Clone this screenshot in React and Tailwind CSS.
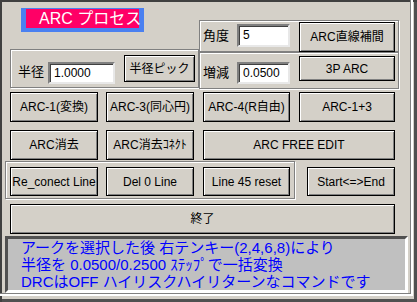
const btn =
  "flex items-center justify-center border border-black bg-[#d4d0c8] text-[12px] leading-none text-black whitespace-nowrap shadow-[inset_1px_1px_0_#ffffff,inset_-1px_-1px_0_#808080]";
const etched = "border border-[#808080] shadow-[inset_1px_1px_0_#ffffff,1px_1px_0_#ffffff]";
const field =
  "bg-white border-2 border-t-[#808080] border-l-[#808080] border-r-[#e8e8e8] border-b-[#e8e8e8] shadow-[inset_1px_1px_0_#404040] text-[12px] leading-none pl-[4px] pt-[3px] text-black";

const ArcProcess = () => {
  return (
    <div className="w-[417px] h-[302px] bg-[#d4d0c8] overflow-hidden font-['Liberation_Sans','Noto_Sans_CJK_JP',sans-serif] shadow-[inset_2px_2px_0_#404040,inset_-3px_-3px_0_#505050]">
      <div className="w-[413px] h-[296px] shadow-[inset_-2px_-2px_0_#ffffff,inset_-3px_-3px_0_#808080]">
        {/* top area */}
        <div className="flex h-[89px]">
          <div className="w-[199px] flex flex-col">
            <div className="ml-[21px] mt-[8px] w-[123px] h-[24px] bg-[#4a80f0] px-[5px] pt-[1px] pb-[4px]">
              <div className="h-full bg-[#ff0066] text-white text-[16px] leading-[19px] pl-[13px] whitespace-nowrap">
                ARC プロセス
              </div>
            </div>
            <div className={`ml-[10px] mt-[17px] w-[189px] h-[39px] flex items-start ${etched}`}>
              <span className="ml-[7px] mt-[15px] text-[13px] leading-none">半径</span>
              <div className={`ml-[4px] mt-[12px] w-[67px] h-[22px] ${field}`}>1.0000</div>
              <button className={`ml-[9px] mt-[5px] w-[71px] h-[27px] ${btn}`}>半径ピック</button>
            </div>
          </div>
          <div className="flex flex-col mt-[20px]">
            <div className={`w-[200px] h-[32px] flex items-start ${etched}`}>
              <span className="ml-[3px] mt-[8px] text-[13px] leading-none">角度</span>
              <div className={`ml-[8px] mt-[3px] w-[53px] h-[23px] ${field}`}>5</div>
              <button className={`ml-[9px] mt-[1px] w-[96px] h-[30px] ${btn}`}>ARC直線補間</button>
            </div>
            <div className={`w-[200px] h-[37px] flex items-start ${etched}`}>
              <span className="ml-[3px] mt-[13px] text-[13px] leading-none">増減</span>
              <div className={`ml-[8px] mt-[9px] w-[53px] h-[22px] ${field}`}>0.0500</div>
              <button className={`ml-[9px] mt-[3px] w-[96px] h-[25px] ${btn}`}>3P ARC</button>
            </div>
          </div>
        </div>

        {/* row 1 */}
        <div className="flex mt-[3px] h-[30px]">
          <button className={`ml-[10px] w-[88px] ${btn}`}>ARC-1(変換)</button>
          <button className={`ml-[8px] w-[88px] ${btn}`}>ARC-3(同心円)</button>
          <button className={`ml-[9px] w-[87px] ${btn}`}>ARC-4(R自由)</button>
          <button className={`ml-[9px] w-[96px] ${btn}`}>ARC-1+3</button>
        </div>

        {/* row 2 */}
        <div className="flex mt-[8px] h-[30px]">
          <button className={`ml-[10px] w-[88px] ${btn}`}>ARC消去</button>
          <button className={`ml-[8px] w-[88px] ${btn}`}>ARC消去ｺﾈｸﾄ</button>
          <button className={`ml-[9px] w-[192px] ${btn}`}>ARC FREE EDIT</button>
        </div>

        {/* row 3 */}
        <div className="flex items-start mt-[1px] h-[38px]">
          <div className={`ml-[5px] w-[290px] h-[38px] flex pl-[4px] pt-[5px] ${etched}`}>
            <button className={`w-[88px] h-[29px] ${btn}`}>Re_conect Line</button>
            <button className={`ml-[8px] w-[88px] h-[29px] ${btn}`}>Del 0 Line</button>
            <button className={`ml-[9px] w-[87px] h-[29px] ${btn}`}>Line 45 reset</button>
          </div>
          <button className={`ml-[12px] mt-[6px] w-[88px] h-[29px] ${btn}`}>Start&lt;=&gt;End</button>
        </div>

        <button className={`ml-[10px] mt-[5px] w-[385px] h-[30px] ${btn}`}>終了</button>

        {/* message */}
        <div className="ml-[5px] mt-[2px] w-[403px] h-[57px] bg-[#c0c0c0] border-[3px] border-t-[#505050] border-l-[#505050] border-r-white border-b-white pl-[13px] text-[#0000ff] text-[15px] leading-[17px] whitespace-nowrap">
          <div>アークを選択した後 右テンキー(2,4,6,8)により</div>
          <div>半径を 0.0500/0.2500 ｽﾃｯﾌﾟで一括変換</div>
          <div>DRCはOFF ハイリスクハイリターンなコマンドです</div>
        </div>
      </div>
    </div>
  );
};

export default ArcProcess;
